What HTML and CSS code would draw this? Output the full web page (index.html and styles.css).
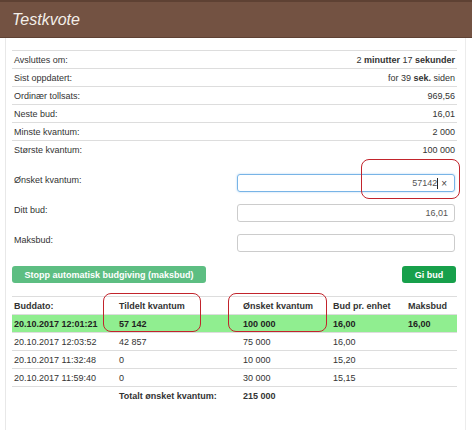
FILE: index.html
```html
<!DOCTYPE html>
<html lang="no">
<head>
<meta charset="utf-8">
<title>Testkvote</title>
<link rel="stylesheet" href="styles.css">
</head>
<body>
<div class="header"><h1>Testkvote</h1></div>
<div class="panel">
  <div class="info">
    <div class="info-row"><span>Avsluttes om:</span><span>2 <b>minutter</b> 17 <b>sekunder</b></span></div>
    <div class="info-row"><span>Sist oppdatert:</span><span>for 39 <b>sek.</b> siden</span></div>
    <div class="info-row"><span>Ordinær tollsats:</span><span>969,56</span></div>
    <div class="info-row"><span>Neste bud:</span><span>16,01</span></div>
    <div class="info-row"><span>Minste kvantum:</span><span>2 000</span></div>
    <div class="info-row last"><span>Største kvantum:</span><span>100 000</span></div>
  </div>

  <div class="form">
    <div class="form-row">
      <label class="label">Ønsket kvantum:</label>
      <div class="field focus"><span class="val">57142</span><span class="caret"></span><span class="clear">×</span></div>
      <div class="mark mark-input"></div>
    </div>
    <div class="form-row">
      <label class="label">Ditt bud:</label>
      <div class="field"><span class="val">16,01</span></div>
    </div>
    <div class="form-row">
      <label class="label">Maksbud:</label>
      <div class="field"></div>
    </div>
  </div>

  <div class="actions">
    <button class="btn btn-light">Stopp automatisk budgiving (maksbud)</button>
    <button class="btn btn-dark">Gi bud</button>
  </div>

  <div class="bids">
    <table class="bid-table">
      <colgroup>
        <col class="c1"><col class="c2"><col class="c3"><col class="c4"><col class="c5">
      </colgroup>
      <thead>
        <tr><th>Buddato:</th><th>Tildelt kvantum</th><th>Ønsket kvantum</th><th>Bud pr. enhet</th><th>Maksbud</th></tr>
      </thead>
      <tbody>
        <tr class="win"><td>20.10.2017 12:01:21</td><td>57 142</td><td>100 000</td><td>16,00</td><td>16,00</td></tr>
        <tr><td>20.10.2017 12:03:52</td><td>42 857</td><td>75 000</td><td>16,00</td><td></td></tr>
        <tr><td>20.10.2017 11:32:48</td><td>0</td><td>10 000</td><td>15,20</td><td></td></tr>
        <tr><td>20.10.2017 11:59:40</td><td>0</td><td>30 000</td><td>15,15</td><td></td></tr>
        <tr class="total"><td></td><td>Totalt ønsket kvantum:</td><td>215 000</td><td></td><td></td></tr>
      </tbody>
    </table>
    <div class="mark mark-col1"></div>
    <div class="mark mark-col2"></div>
  </div>
</div>
</body>
</html>
```

FILE: styles.css
```css
* { box-sizing: border-box; }

html, body {
  margin: 0;
  padding: 0;
  background: #fff;
}

body {
  font-family: "Liberation Sans", Arial, sans-serif;
  font-size: 9px;
  color: #333;
}

.header {
  height: 38px;
  background: #735242;
  border-top: 2px solid #5e4133;
  border-bottom: 1px solid #5e4133;
  padding: 0 12px;
  display: flex;
  align-items: center;
}

.header h1 {
  margin: 0;
  font-size: 16px;
  font-style: italic;
  font-weight: normal;
  color: #f4efe9;
}

.panel {
  margin-left: 5px;
  width: 461px;
  min-height: 392px;
  border-left: 1px solid #e8e8e8;
  border-right: 1px solid #ececec;
  padding: 12px 8px 0 6px;
}

.info-row {
  height: 18px;
  border-top: 1px solid #ddd;
  display: flex;
  align-items: center;
  justify-content: space-between;
  padding: 0 2px;
}

.info-row b { font-weight: bold; }

.form {
  margin-top: 16px;
  display: flex;
  flex-direction: column;
  gap: 12px;
}

.form-row {
  position: relative;
  display: flex;
  align-items: flex-start;
}

.label {
  width: 225px;
  padding-left: 2px;
  line-height: 12px;
}

.field {
  width: 218px;
  height: 18px;
  border: 1px solid #ccc;
  border-radius: 3px;
  display: flex;
  align-items: center;
  justify-content: flex-end;
  padding-right: 6px;
  color: #555;
}

.field.focus {
  border-color: #78b4e6;
  box-shadow: 0 0 2px rgba(102, 175, 233, 0.6);
  padding-right: 7px;
}

.caret {
  width: 1px;
  height: 11px;
  background: #222;
  margin-left: 0;
}

.clear {
  margin-left: 3px;
  font-size: 10px;
  color: #444;
}

.mark {
  position: absolute;
  border: 1.5px solid #c2242c;
  border-radius: 8px;
  pointer-events: none;
}

.mark-input {
  left: 349px;
  top: -15px;
  width: 99px;
  height: 40px;
}

.actions {
  margin-top: 14px;
  display: flex;
  justify-content: space-between;
}

.btn {
  height: 17px;
  border: none;
  border-radius: 3px;
  color: #fff;
  font-family: "Liberation Sans", Arial, sans-serif;
  font-size: 9px;
  font-weight: bold;
  padding: 0;
}

.btn-light {
  width: 194px;
  background: #5dbe82;
}

.btn-dark {
  width: 54px;
  margin-right: 1px;
  background: #17a04b;
}

.bids {
  position: relative;
  margin-top: 13px;
}

.bid-table {
  width: 445px;
  border-collapse: collapse;
  table-layout: fixed;
}

.c1 { width: 105px; }
.c2 { width: 124px; }
.c3 { width: 90px; }
.c4 { width: 75px; }
.c5 { width: 51px; }

.bid-table th,
.bid-table td {
  height: 18px;
  padding: 0 2px;
  text-align: left;
  border-top: 1px solid #ddd;
  white-space: nowrap;
  vertical-align: middle;
}

.bid-table th { font-weight: bold; }

.bid-table tr.win td {
  background: #90ee90;
  font-weight: bold;
  color: #222;
}

.bid-table tr.total td {
  font-weight: bold;
}

.mark-col1 {
  left: 91px;
  top: -3px;
  width: 98px;
  height: 39px;
}

.mark-col2 {
  left: 216px;
  top: -3px;
  width: 99px;
  height: 39px;
}
```
